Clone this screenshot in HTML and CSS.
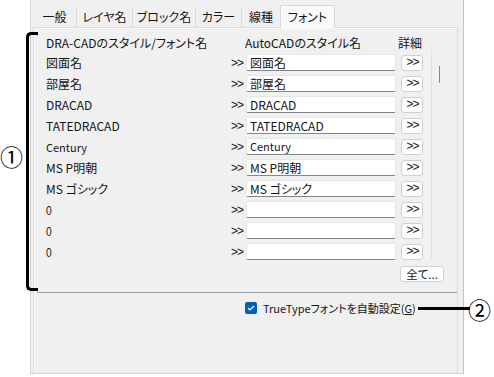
FILE: index.html
```html
<!DOCTYPE html>
<html lang="ja">
<head>
    <meta charset="UTF-8">
    <title>フォント設定</title>
    <link rel="stylesheet" href="styles.css">
</head>
<body>
    <div class="dialog">
        <div class="tabs">
            <div class="tab">一般</div>
            <div class="tab">レイヤ名</div>
            <div class="tab">ブロック名</div>
            <div class="tab">カラー</div>
            <div class="tab">線種</div>
            <div class="tab active">フォント</div>
        </div>
        <div class="page">
            <div class="list">
                <div class="head">
                    <span class="col-name">DRA-CADのスタイル/フォント名</span>
                    <span class="col-acad">AutoCADのスタイル名</span>
                    <span class="col-det">詳細</span>
                </div>
                <div class="rows">
                    <div class="row"><span class="name">図面名</span><span class="arr">&gt;&gt;</span><div class="field">図面名</div><button class="det">&gt;&gt;</button></div>
                    <div class="row"><span class="name">部屋名</span><span class="arr">&gt;&gt;</span><div class="field">部屋名</div><button class="det">&gt;&gt;</button></div>
                    <div class="row"><span class="name">DRACAD</span><span class="arr">&gt;&gt;</span><div class="field">DRACAD</div><button class="det">&gt;&gt;</button></div>
                    <div class="row"><span class="name">TATEDRACAD</span><span class="arr">&gt;&gt;</span><div class="field">TATEDRACAD</div><button class="det">&gt;&gt;</button></div>
                    <div class="row"><span class="name small">Century</span><span class="arr">&gt;&gt;</span><div class="field small">Century</div><button class="det">&gt;&gt;</button></div>
                    <div class="row"><span class="name">MS P明朝</span><span class="arr">&gt;&gt;</span><div class="field">MS P明朝</div><button class="det">&gt;&gt;</button></div>
                    <div class="row"><span class="name">MS ゴシック</span><span class="arr">&gt;&gt;</span><div class="field">MS ゴシック</div><button class="det">&gt;&gt;</button></div>
                    <div class="row"><span class="name"><span class="narrow">0</span></span><span class="arr">&gt;&gt;</span><div class="field"></div><button class="det">&gt;&gt;</button></div>
                    <div class="row"><span class="name"><span class="narrow">0</span></span><span class="arr">&gt;&gt;</span><div class="field"></div><button class="det">&gt;&gt;</button></div>
                    <div class="row"><span class="name"><span class="narrow">0</span></span><span class="arr">&gt;&gt;</span><div class="field"></div><button class="det">&gt;&gt;</button></div>
                    <div class="scroll"><div class="thumb"></div></div>
                </div>
                <div class="all-row">
                    <button class="all">全て...</button>
                </div>
            </div>
            <div class="options">
                <label class="check"><span class="box">
                    <svg width="8" height="6" viewBox="0 0 8 6"><path d="M1 3 L3 5 L7 1" fill="none" stroke="white" stroke-width="1.2"/></svg>
                </span>TrueTypeフォントを自動設定(<u>G</u>)</label>
            </div>
        </div>
    </div>

    <!-- annotations -->
    <div class="bracket"></div>
    <div class="mark mark-1">①</div>
    <div class="leader"></div>
    <div class="mark mark-2">②</div>
</body>
</html>
```

FILE: styles.css
```css
body {
    margin: 0;
    background: white;
    font-family: "Noto Sans CJK JP", "Noto Sans", sans-serif;
    font-size: 12px;
    color: rgb(20, 20, 20);
    font-feature-settings: "palt";
    position: relative;
    width: 494px;
    height: 377px;
    overflow: hidden;
}

.dialog {
    margin-left: 30px;
    width: 434px;
    height: 374px;
    box-sizing: border-box;
    background: #f0f0f0;
    border-left: 1px solid #d4d4d4;
    border-right: 1px solid #c4c4c4;
    border-bottom: 1px solid #d4d4d4;
    padding: 5px 5px 0 2px;
    display: flex;
    flex-direction: column;
}

.tabs {
    display: flex;
    height: 22px;
    position: relative;
    z-index: 1;
}

.tab {
    margin-top: 3px;
    height: 19px;
    line-height: 18px;
    box-sizing: border-box;
    border-right: 1px solid #dadada;
    text-align: center;
}

.tab:nth-child(1) { width: 44px; }
.tab:nth-child(2) { width: 56px; }
.tab:nth-child(3) { width: 63px; }
.tab:nth-child(4) { width: 46px; }
.tab:nth-child(5) { width: 39px; }

.tab.active {
    margin-top: 0;
    height: 23px;
    line-height: 21px;
    width: 55px;
    background: #f9f9f9;
    border: 1px solid #d9d9d9;
    border-bottom: none;
    margin-left: -1px;
}

.page {
    flex: 1;
    border: 1px solid #dcdcdc;
    border-bottom: none;
    box-shadow: inset 1px 1px 0 #fafafa;
    display: flex;
    flex-direction: column;
}

.list {
    height: 265px;
    padding: 5px 0 0 9px;
    box-sizing: border-box;
    border-bottom: 1px solid #a0a0a0;
    margin: 0 0 0 3px;
}

.head {
    display: flex;
    height: 18px;
    align-items: center;
    margin-bottom: 1px;
}

.col-name { width: 199px; }
.col-acad { width: 153px; }

.rows {
    position: relative;
    width: 400px;
}

.row {
    display: flex;
    align-items: center;
    height: 21px;
}

.name { width: 185px; }
.name.small { font-size: 11px; }

.narrow {
    display: inline-block;
    font-family: "Liberation Sans", sans-serif;
    font-size: 12px;
    transform: scaleX(0.85);
    transform-origin: left;
}

.arr {
    width: 15px;
    font-family: "Liberation Sans", sans-serif;
    font-size: 12px;
    letter-spacing: -1px;
}

.field {
    width: 150px;
    height: 17px;
    box-sizing: border-box;
    background: white;
    border: 1px solid #e6e6e6;
    border-bottom-color: #858585;
    border-radius: 2px;
    padding-left: 3px;
    line-height: 15px;
}

.field.small { font-size: 11px; }

.det {
    margin-left: 5px;
    width: 22px;
    height: 16px;
    padding: 0 0 0 1px;
    background: #fdfdfd;
    border: 1px solid #d0d0d0;
    border-radius: 3px;
    font-family: "Liberation Sans", sans-serif;
    font-size: 12px;
    letter-spacing: -1px;
    line-height: 13px;
    color: rgb(20, 20, 20);
}

.scroll {
    position: absolute;
    left: 385px;
    top: -2px;
    width: 15px;
    height: 210px;
    border-left: 1px solid #e2e2e2;
}

.thumb {
    margin: 16px 0 0 7px;
    width: 1px;
    height: 17px;
    background: #868686;
}

.all-row {
    display: flex;
    justify-content: flex-end;
    padding: 4px 13px 0 0;
}

.all {
    width: 44px;
    height: 16px;
    padding: 0;
    background: #fdfdfd;
    border: 1px solid #d0d0d0;
    border-radius: 3px;
    font: inherit;
    font-size: 11.5px;
    line-height: 13px;
    color: rgb(20, 20, 20);
}

.options {
    flex: 1;
    padding: 7px 0 0 211px;
}

.check {
    display: flex;
    align-items: center;
    font-size: 11px;
}

.box {
    width: 12px;
    height: 12px;
    border-radius: 2px;
    background: #005fb8;
    margin-right: 6px;
    display: flex;
    align-items: center;
    justify-content: center;
}

/* annotations over the screenshot */
.bracket {
    position: absolute;
    left: 26px;
    top: 32px;
    width: 9px;
    height: 253px;
    border: 3px solid black;
    border-right: none;
    border-radius: 5px 0 0 5px;
}

.mark {
    position: absolute;
    font-size: 23px;
    line-height: 23px;
    color: black;
    font-feature-settings: normal;
}

.mark-1 { left: 0; top: 145px; }
.mark-2 { left: 468px; top: 298px; }

.leader {
    position: absolute;
    left: 418px;
    top: 307px;
    width: 52px;
    height: 3px;
    background: black;
}
```
